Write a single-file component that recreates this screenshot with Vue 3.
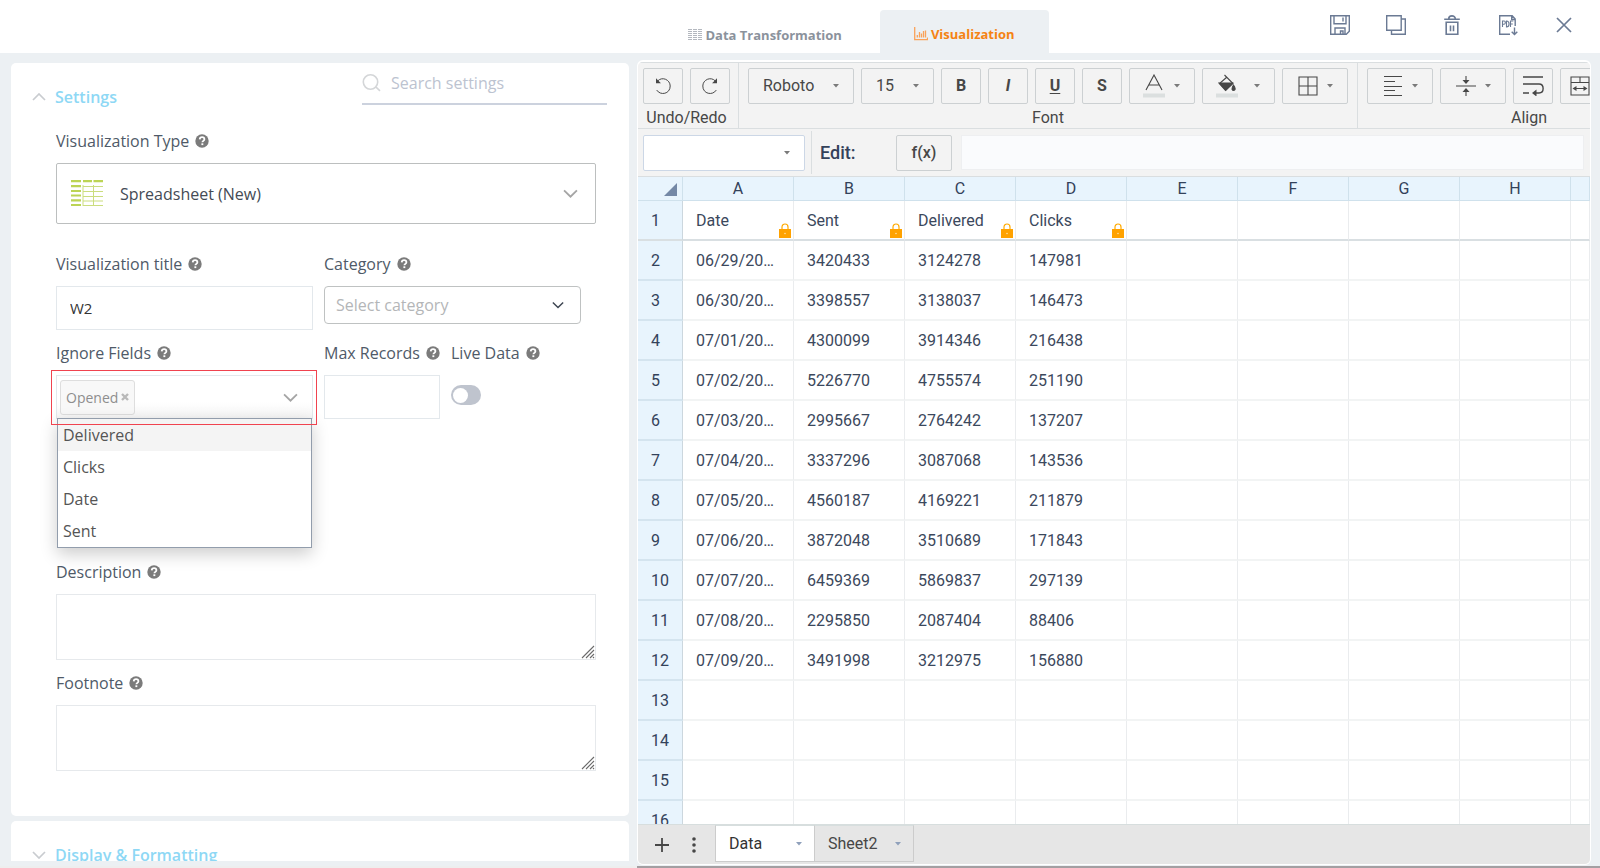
<script setup>
import { ref } from 'vue'

const title = ref('W2')
const category = ref('')
const vizType = ref('spreadsheet')
const live = ref(false)
const options = ['Delivered', 'Clicks', 'Date', 'Sent']
const letters = ['A', 'B', 'C', 'D', 'E', 'F', 'G', 'H']
const data = [
  ['Date', 'Sent', 'Delivered', 'Clicks'],
  ['06/29/20…', '3420433', '3124278', '147981'],
  ['06/30/20…', '3398557', '3138037', '146473'],
  ['07/01/20…', '4300099', '3914346', '216438'],
  ['07/02/20…', '5226770', '4755574', '251190'],
  ['07/03/20…', '2995667', '2764242', '137207'],
  ['07/04/20…', '3337296', '3087068', '143536'],
  ['07/05/20…', '4560187', '4169221', '211879'],
  ['07/06/20…', '3872048', '3510689', '171843'],
  ['07/07/20…', '6459369', '5869837', '297139'],
  ['07/08/20…', '2295850', '2087404', '88406'],
  ['07/09/20…', '3491998', '3212975', '156880'],
  [], [], [], [],
]
const styles = [
  { text: 'B', label: 'Bold', cls: 'bold' },
  { text: 'I', label: 'Italic', cls: 'italic' },
  { text: 'U', label: 'Underline', cls: 'under' },
  { text: 'S', label: 'Strikethrough', cls: 'bold' },
]
</script>

<template>
  <div class="page">
    <svg class="defs" aria-hidden="true">
      <symbol id="help" viewBox="0 0 14 14">
        <circle cx="7" cy="7" r="6.7" fill="#7b7b7b" />
        <path d="M4.7 5.4C4.8 3.9 5.8 3.2 7.1 3.2c1.3 0 2.3.8 2.3 2 0 1.6-2 1.7-2 3.1" fill="none" stroke="#fff" stroke-width="1.8" />
        <rect x="6.4" y="9.3" width="1.9" height="1.8" fill="#fff" />
      </symbol>
      <symbol id="chev" viewBox="0 0 14 8">
        <path d="M1 1l6 6 6-6" fill="none" stroke="currentColor" stroke-width="1.7" />
      </symbol>
      <symbol id="caret" viewBox="0 0 6 4"><path d="M0 0h6L3 3.6z" fill="currentColor" /></symbol>
    </svg>

    <header class="top">
      <nav class="tabs">
        <a href="#data" class="tab">
          <svg width="14" height="11" viewBox="0 0 14 11" fill="none" stroke="#b4b8bf" stroke-width="1">
            <path d="M0 .5h4M5 .5h4M10 .5h4M0 2.5h4M5 2.5h4M10 2.5h4M0 4.5h4M5 4.5h4M10 4.5h4M0 6.5h4M5 6.5h4M10 6.5h4M0 8.5h4M5 8.5h4M10 8.5h4M0 10.5h4M5 10.5h4M10 10.5h4" />
          </svg>
          <span>Data Transformation</span>
        </a>
        <a href="#viz" class="tab active">
          <svg width="14" height="14" viewBox="0 0 14 14" fill="none" stroke="#f9a25a" stroke-width="1.3">
            <path d="M.7 0v12.7H13.5V10.5M3.3 10.5V8M5.5 10.5V5M7.5 10.5V6.5M9.5 10.5V4M11.5 10.5V3.5" />
          </svg>
          <span>Visualization</span>
        </a>
      </nav>
      <div class="actions">
        <button aria-label="Save">
          <svg width="22" height="22" viewBox="0 0 22 22"><path d="M1.7 1.7h18.600v15.500l-3 3H1.700zM5 1.700v8h12v-8M14 3.500v4M6 20v-6h10v6M11.500 20v-3h2.500v3" /></svg>
        </button>
        <button aria-label="Duplicate">
          <svg width="22" height="22" viewBox="0 0 22 22"><path d="M1.700 1.700h14.500v14.500H1.700zM16.200 5h4.100v15.300H6.500v-4" /></svg>
        </button>
        <button aria-label="Delete">
          <svg width="22" height="22" viewBox="0 0 22 22"><path d="M3.200 5.200h15.600M7.700 5c0-4.200 6.600-4.200 6.600 0M5.200 8.200h11.600v12H5.200zM9.500 11.500v5.700M12.500 11.500v5.700" stroke-width="1.600" /></svg>
        </button>
        <button aria-label="Export PDF">
          <svg width="22" height="22" viewBox="0 0 22 22"><path d="M13 20.300H2.700V1.700h12.500l3 3.300V12M14.700 2v3.500h3.500M17.500 13.500v7M14.700 17.700l2.800 2.800 2.800-2.800" /><path d="M5.500 13V7h1.700c1.500 0 1.500 3.200 0 3.200H5.500M9.500 7v6c3.400 0 3.400-6 0-6zM13.500 13V7h2.800M13.500 10h2.300" stroke-width="1.100" /></svg>
        </button>
        <button aria-label="Close">
          <svg width="22" height="22" viewBox="0 0 22 22"><path d="M4 4l14 14M18 4L4 18" stroke-width="1.700" /></svg>
        </button>
      </div>
    </header>

    <main class="body">
      <div class="left">
        <section class="card">
          <div class="card-head">
            <h2><svg class="fold up"><use href="#chev" /></svg><span>Settings</span></h2>
            <label class="search">
              <svg width="20" height="18" viewBox="0 0 20 18" fill="none" stroke="#d4d6d8" stroke-width="1.600"><circle cx="8.500" cy="8" r="7.200" /><path d="M14 13.200l4 3.600" /></svg>
              <input type="search" placeholder="Search settings" aria-label="Search settings" />
            </label>
          </div>

          <div class="form">
            <div class="field">
              <label for="vtype">Visualization Type <svg class="help"><use href="#help" /></svg></label>
              <div class="type-box">
                <svg width="32" height="27" viewBox="0 0 32 27" fill="none" stroke="#bcd455">
                  <path d="M0 1.200h10M12 1.200h9M22.500 1.200h9.500M0 6.200h10M0 11h10M0 15.500h10M0 20.300h10M0 25h10" stroke-width="2.200" />
                  <path d="M12 5v21M22.500 5v21M12 6.500h20M12 11.500h20M12 16.500h20M12 21h20M12 25.500h20" stroke-width="1" stroke="#cbdd7e" />
                </svg>
                <select id="vtype" v-model="vizType"><option value="spreadsheet">Spreadsheet (New)</option></select>
                <svg class="chev"><use href="#chev" /></svg>
              </div>
            </div>

            <div class="row first">
              <div class="field wide">
                <label for="vtitle">Visualization title <svg class="help"><use href="#help" /></svg></label>
                <input id="vtitle" v-model="title" class="text" type="text" />
              </div>
              <div class="field wide">
                <label for="cat">Category <svg class="help"><use href="#help" /></svg></label>
                <div class="cat-box">
                  <select id="cat" v-model="category"><option value="">Select category</option></select>
                  <svg class="chev small"><use href="#chev" /></svg>
                </div>
              </div>
            </div>

            <div class="row second">
              <div class="field wide">
                <label for="ignore">Ignore Fields <svg class="help"><use href="#help" /></svg></label>
                <div class="multi">
                  <button class="tag">Opened <svg width="8" height="8" viewBox="0 0 8 8" stroke="#b9b9b9" stroke-width="2.400"><path d="M1 1l6 6M7 1L1 7" /></svg></button>
                  <button id="ignore" class="opener" aria-haspopup="listbox" aria-expanded="true"><svg class="chev"><use href="#chev" /></svg></button>
                  <ul class="menu" role="listbox" aria-label="Ignore Fields">
                    <li v-for="(o, i) in options" :key="o" role="option" :class="{ on: i === 0 }">{{ o }}</li>
                  </ul>
                  <div class="mark"></div>
                </div>
              </div>
              <div class="field narrow">
                <label for="max">Max Records <svg class="help"><use href="#help" /></svg></label>
                <input id="max" class="text" type="text" />
              </div>
              <div class="field">
                <label for="live">Live Data <svg class="help"><use href="#help" /></svg></label>
                <input id="live" v-model="live" class="toggle" type="checkbox" role="switch" />
              </div>
            </div>

            <div class="field desc">
              <label for="desc">Description <svg class="help"><use href="#help" /></svg></label>
              <div class="area"><textarea id="desc"></textarea><svg class="grip" viewBox="0 0 14 14"><path d="M1 13L13 1M5 13l8-8M9 13l4-4M12 13l1-1" /></svg></div>
            </div>
            <div class="field foot">
              <label for="note">Footnote <svg class="help"><use href="#help" /></svg></label>
              <div class="area"><textarea id="note"></textarea><svg class="grip" viewBox="0 0 14 14"><path d="M1 13L13 1M5 13l8-8M9 13l4-4M12 13l1-1" /></svg></div>
            </div>
          </div>
        </section>

        <section class="card next">
          <h2><svg class="fold"><use href="#chev" /></svg><span>Display &amp; Formatting</span></h2>
        </section>
      </div>

      <section class="sheet">
        <div class="tools">
          <div class="group undo">
            <div class="btns">
              <button class="tb sq" aria-label="Undo"><svg width="18" height="18" viewBox="0 0 20 20"><path d="M4 4.500C9-1 18 3 18 10c0 9-11 11-15 4.500" /><path d="M2.200 1.500v5.500h5.500z" fill="#474747" stroke="none" /></svg></button>
              <button class="tb sq" aria-label="Redo"><svg width="18" height="18" viewBox="0 0 20 20"><path d="M16 4.500C11-1 2 3 2 10c0 9 11 11 15 4.500" /><path d="M17.800 1.500v5.500h-5.500z" fill="#474747" stroke="none" /></svg></button>
            </div>
            <span>Undo/Redo</span>
          </div>
          <div class="group">
            <div class="btns">
              <div class="tb pick family">
                <select aria-label="Font family"><option>Roboto</option></select>
                <svg class="caret"><use href="#caret" /></svg>
              </div>
              <div class="tb pick size">
                <select aria-label="Font size"><option>15</option></select>
                <svg class="caret"><use href="#caret" /></svg>
              </div>
              <button v-for="s in styles" :key="s.text" class="tb sq" :aria-label="s.label"><span :class="s.cls">{{ s.text }}</span></button>
              <button class="tb mid" aria-label="Text colour">
                <svg width="22" height="24" viewBox="0 0 22 24"><path d="M3 16L11 1l8 15M6 11h10" /><path d="M0 21.500h22" stroke="#dbdfdf" stroke-width="4" /></svg>
                <svg class="caret"><use href="#caret" /></svg>
              </button>
              <button class="tb big" aria-label="Fill colour">
                <svg width="22" height="24" viewBox="0 0 22 24"><path d="M8.500 1l8.500 8.500-7 6.500-6.500-6.500L11 3" /><path d="M3 9h13.500L9.500 16.500zM17.500 11c3 4 1.500 5.500 0 5.500s-2.500-1.500 0-5.500z" fill="#474747" /><path d="M0 21.500h22" stroke="#dbdfdf" stroke-width="4" /></svg>
                <svg class="caret"><use href="#caret" /></svg>
              </button>
              <button class="tb mid" aria-label="Borders">
                <svg width="20" height="20" viewBox="0 0 20 20"><path d="M1 1h18v18H1zM10 1v18M1 10h18" /></svg>
                <svg class="caret"><use href="#caret" /></svg>
              </button>
            </div>
            <span>Font</span>
          </div>
          <div class="group">
            <div class="btns">
              <button class="tb mid" aria-label="Horizontal align">
                <svg width="20" height="20" viewBox="0 0 20 20"><path d="M1 .5h18M1 5.500h11M1 10.500h18M1 14.500h11M1 19.500h18" /></svg>
                <svg class="caret"><use href="#caret" /></svg>
              </button>
              <button class="tb mid" aria-label="Vertical align">
                <svg width="20" height="20" viewBox="0 0 20 20"><path d="M0 10h20M10 0v6M10 14v6" /><path d="M6.500 4h7L10 8zM6.500 16h7L10 12z" fill="#474747" stroke="none" /></svg>
                <svg class="caret"><use href="#caret" /></svg>
              </button>
              <button class="tb sq" aria-label="Wrap text"><svg width="22" height="20" viewBox="0 0 22 20"><path d="M1 1h20M1 8h16c5.500 0 5.500 9 0 9h-5M1 17h6" stroke-width="1.400" /><path d="M14.500 13.500v7L10 17z" fill="#474747" stroke="none" /></svg></button>
              <button class="tb sq" aria-label="Merge cells"><svg width="20" height="20" viewBox="0 0 20 20"><path d="M1 1h18v18H1zM1 6.500h18M10 1v5.500M4 12.500h12" /><path d="M6.500 10v5L2.500 12.500zM13.500 10v5l4-2.500z" fill="#474747" stroke="none" /></svg></button>
              <button class="tb more" aria-label="Number format"></button>
            </div>
            <span>Align</span>
          </div>
        </div>

        <div class="formula">
          <div class="name-box">
            <select aria-label="Named range"><option></option></select>
            <svg class="caret"><use href="#caret" /></svg>
          </div>
          <i class="rule"></i>
          <label for="fx">Edit:</label>
          <button class="tb fx">f(x)</button>
          <input id="fx" type="text" />
        </div>

        <div class="grid">
          <table>
            <colgroup><col class="c0" /><col v-for="l in letters" :key="l" class="c1" /><col /></colgroup>
            <thead>
              <tr>
                <th><svg class="corner" viewBox="0 0 13 13"><path d="M13 0v13H0z" fill="#7488a6" /></svg></th>
                <th v-for="l in letters" :key="l">{{ l }}</th>
                <th></th>
              </tr>
            </thead>
            <tbody>
              <tr v-for="(r, i) in data" :key="i" :class="{ frozen: i === 0 }">
                <th>{{ i + 1 }}</th>
                <td v-for="c in 9" :key="c">{{ r[c - 1] }}<svg v-if="i === 0 && c < 5" class="lock" viewBox="0 0 12 15"><path d="M3 7V4c0-4 6-4 6 0v3" fill="none" stroke="#fa0" stroke-width="1.200" /><path d="M0 6h12v9H0z" fill="#ffa200" /><circle cx="6" cy="10.500" r=".8" fill="#ffe0a0" /></svg></td>
              </tr>
            </tbody>
          </table>
        </div>

        <div class="sheets">
          <button class="plain" aria-label="Add sheet"><svg width="14" height="14" viewBox="0 0 14 14"><path d="M7 0v14M0 7h14" stroke="#474747" stroke-width="1.800" /></svg></button>
          <button class="plain" aria-label="Sheet list"><svg width="4" height="16" viewBox="0 0 4 16" fill="#474747"><circle cx="2" cy="2" r="1.800" /><circle cx="2" cy="8" r="1.800" /><circle cx="2" cy="14" r="1.800" /></svg></button>
          <button class="stab current">Data <svg class="caret"><use href="#caret" /></svg></button>
          <button class="stab">Sheet2 <svg class="caret"><use href="#caret" /></svg></button>
        </div>
      </section>
    </main>
    <div class="edge"><i></i><i class="dark"></i></div>
  </div>
</template>

<style>
body { margin: 0; overflow: hidden; }
</style>

<style scoped>
* { box-sizing: border-box; }
button, input, select, textarea { font: inherit; color: inherit; margin: 0; padding: 0; border: 0; background: none; outline: 0; border-radius: 0; }
select { appearance: none; }
a { text-decoration: none; }
svg { flex: none; }
.defs { position: absolute; width: 0; height: 0; }
.page { height: 100vh; display: flex; flex-direction: column; background: #ecf0f3; font-family: "Open Sans", "Noto Sans", sans-serif; font-size: 16px; color: #4f5a68; overflow: hidden; }

.top { flex: none; height: 53px; background: #fff; display: grid; grid-template-columns: 1fr auto 1fr; align-items: end; }
.tabs { grid-column: 2; display: flex; margin-left: 105px; }
.tab { height: 43px; display: flex; align-items: center; gap: 3px; padding: 6px 38px 0 32px; font-size: 13px; font-weight: 700; color: #8b929c; }
.tab.active { background: #ecf0f3; color: #f58313; border-radius: 4px 4px 0 0; padding: 4px 34px 0; }
.actions { grid-column: 3; align-self: start; justify-self: end; display: flex; gap: 34px; padding: 14px 25px 0 0; }
.actions button { width: 22px; height: 22px; display: flex; }
.actions svg { fill: none; stroke: #6b7a94; stroke-width: 1.4; }

.body { flex: 1; min-height: 0; display: grid; grid-template-columns: minmax(0, 618fr) minmax(0, 954fr); gap: 8px; padding: 7px 9px 1px 11px; }
.left { min-height: 0; overflow: hidden; margin: 3px 0 4px; display: flex; flex-direction: column; gap: 5px; }
.card { flex: none; background: #fff; border-radius: 5px; padding-bottom: 45px; }
.card-head { display: flex; justify-content: space-between; padding-right: 22px; }
h2 { margin: 0; padding: 22px 0 0 21px; display: flex; align-items: center; gap: 9px; font-size: 16px; line-height: 24px; font-weight: 600; color: #8ed8f5; }
.fold { width: 14px; height: 8px; color: #c9ccd0; }
.up { transform: rotate(180deg); }
.search { width: 245px; height: 42px; display: flex; align-items: center; gap: 9px; border-bottom: 2px solid #ccd2de; }
.search input { flex: 1; min-width: 0; font-size: 16px; }
.search input::placeholder { color: #bcc3d0; opacity: 1; }
.next { padding-bottom: 20px; }
.form { padding: 20px 33px 0 45px; }
.field { display: flex; flex-direction: column; gap: 10px; min-width: 0; }
.field > label { display: flex; align-items: center; gap: 6px; line-height: 24px; white-space: nowrap; font-size: 16px; }
.help { width: 14px; height: 14px; }
.chev { width: 15px; height: 9px; color: #a5a5a5; pointer-events: none; }
.small { width: 12px; height: 8px; color: #3e4652; }
.type-box { height: 61px; border: 1px solid #bcbfbf; border-radius: 2px; display: flex; align-items: center; padding: 0 17px 0 14px; gap: 17px; font-size: 16px; color: #444b55; }
.type-box select { flex: 1; height: 100%; }
.row { display: flex; gap: 11px; }
.first { margin-top: 28px; }
.second { margin-top: 11px; }
.wide { flex: 0 1 257px; }
.narrow { flex: 0 1 116px; }
.text { width: 100%; height: 44px; border: 1px solid #e3e8ec; padding: 0 13px; font-size: 15px; color: #333; }
.cat-box { height: 38px; border: 1px solid #bfc2c2; border-radius: 4px; display: flex; align-items: center; padding: 0 16px 0 11px; color: #b4b6b8; }
.cat-box select { flex: 1; height: 100%; }
.multi { position: relative; height: 44px; border: 1px solid #e3e8ec; display: flex; align-items: center; justify-content: space-between; padding: 0 14px 0 3px; background: linear-gradient(#fff 60%, #f6f6f6); }
.opener { display: flex; }
.tag { height: 35px; padding: 0 5px; display: flex; align-items: center; gap: 3px; border: 1px solid #dedede; border-radius: 3px; background: #f8f8f8; font-size: 14px; color: #8e8e8e; }
.menu { position: absolute; left: 0; right: 0; top: 42px; z-index: 1; margin: 0; padding: 0; list-style: none; background: #fff; border: 1px solid #929dac; box-shadow: 0 6px 16px rgba(0, 0, 0, .2); font-size: 16px; line-height: 32px; color: #555; }
.menu li { padding-left: 5px; }
.menu .on { background: #f4f4f4; }
.mark { position: absolute; inset: -6px -5px -7px -6px; z-index: 2; border: 1px solid #f0434f; pointer-events: none; }
.toggle { appearance: none; width: 30px; height: 20px; margin-top: 10px; border-radius: 10px; background: #bfc4ce; display: flex; align-items: center; padding: 2px; }
.toggle::before { content: ""; width: 15px; height: 15px; border-radius: 50%; background: #fff; }
.toggle:checked { justify-content: flex-end; background: #8ed8f5; }
.desc { margin-top: 141px; }
.foot { margin-top: 11px; }
.area { position: relative; height: 66px; }
textarea { display: block; width: 100%; height: 100%; border: 1px solid #e6e9ec; resize: none; }
.grip { position: absolute; right: 1px; bottom: 1px; width: 14px; height: 14px; stroke: #6b6b6b; stroke-width: 1.1; }

.sheet { min-height: 0; display: flex; flex-direction: column; overflow: hidden; background: #f3f3f3; border: 1px solid #fff; border-top-width: 2px; border-radius: 6px; font-family: Roboto, sans-serif; font-size: 16px; color: #475466; }
.tools { flex: none; height: 67px; display: flex; overflow: hidden; border-top: 1px solid #dadee0; border-bottom: 1px solid #dadee0; color: #474747; }
.group { flex: none; display: flex; flex-direction: column; align-items: center; gap: 4px; padding: 5px 9px 0; border-right: 1px solid #dadee0; line-height: 20px; }
.undo { padding: 5px 8px 0 5px; }
.btns { display: flex; gap: 7px; }
.tb { height: 36px; flex: none; display: flex; align-items: center; justify-content: center; border: 1px solid #ccd0d2; border-radius: 2px; color: #474747; }
.tb svg { fill: none; stroke: #474747; stroke-width: 1.1; }
.tb .caret { stroke: none; }
.caret { width: 6px; height: 4px; color: #7a7a7a; pointer-events: none; }
.sq { width: 40px; }
.mid { width: 66px; gap: 9px; padding-right: 14px; justify-content: flex-end; }
.big { width: 73px; gap: 16px; padding-right: 14px; justify-content: flex-end; }
.more { width: 84px; }
.pick { padding: 0 14px; gap: 4px; }
.pick select { flex: 1; min-width: 0; height: 100%; }
.family { width: 106px; }
.size { width: 73px; }
.bold, .italic, .under { font-weight: 700; }
.italic { font-style: italic; }
.under { text-decoration: underline; text-decoration-thickness: 1px; text-underline-offset: 2px; }
.formula { flex: none; height: 48px; display: flex; align-items: center; padding: 0 6px 0 5px; border-bottom: 1px solid #dadee0; }
.name-box { width: 162px; height: 36px; display: flex; align-items: center; background: #fff; border: 1px solid #ccd7e6; border-radius: 2px; padding-right: 14px; }
.name-box select { flex: 1; }
.rule { align-self: stretch; margin: 2px 8px 2px 6px; border-left: 1px solid #dadee0; }
.formula label { width: 76px; font-size: 18px; font-weight: 500; color: #33415a; }
.fx { width: 56px; margin-right: 9px; font-weight: 500; }
.formula input { flex: 1; height: 35px; background: #fafbfd; border: 1px solid #eeeff1; }
.grid { flex: 1; min-height: 0; overflow: hidden; background: #fff; }
table { width: 100%; table-layout: fixed; border-collapse: separate; border-spacing: 0; }
.c0 { width: 45px; }
.c1 { width: 111px; }
th { padding: 0; font-weight: 400; background: #e8f4fd; color: #33425a; text-align: center; }
thead th { height: 24px; position: relative; border-right: 1px solid #cfe1ec; border-bottom: 1px solid #cfe1ec; }
.corner { position: absolute; right: 5px; bottom: 4px; width: 13px; height: 13px; }
tbody th { height: 40px; padding-left: 13px; text-align: left; border-right: 1px solid #ccd7de; border-bottom: 2px solid #d4e4ef; }
td { position: relative; height: 40px; padding: 0 0 0 13px; border-right: 1px solid #eaecee; border-bottom: 2px solid #f2f4f4; color: #3b485c; white-space: nowrap; }
.frozen th, .frozen td { border-bottom-color: #d9dfe2; }
.lock { position: absolute; right: 2px; bottom: 1px; width: 12px; height: 15px; }
.sheets { flex: none; height: 40px; display: flex; background: #e6e6e6; border-top: 1px solid #d7dede; color: #474747; }
.plain { width: 32px; display: flex; align-items: center; justify-content: center; }
.plain:first-child { margin-left: 8px; }
.stab { height: 37px; width: 100px; display: flex; align-items: center; justify-content: space-between; padding: 0 12px 0 13px; border: 1px solid #ccc; border-top-color: #d7dede; }
.stab .caret { color: #8fa0bb; }
.current { width: 99px; margin-left: 5px; background: #fff; border-right: 0; color: #333; }
.edge { flex: none; height: 2px; display: grid; grid-template-columns: minmax(0, 637fr) minmax(0, 963fr); background: #eee; }
.dark { background: #a39fa2; }
</style>
